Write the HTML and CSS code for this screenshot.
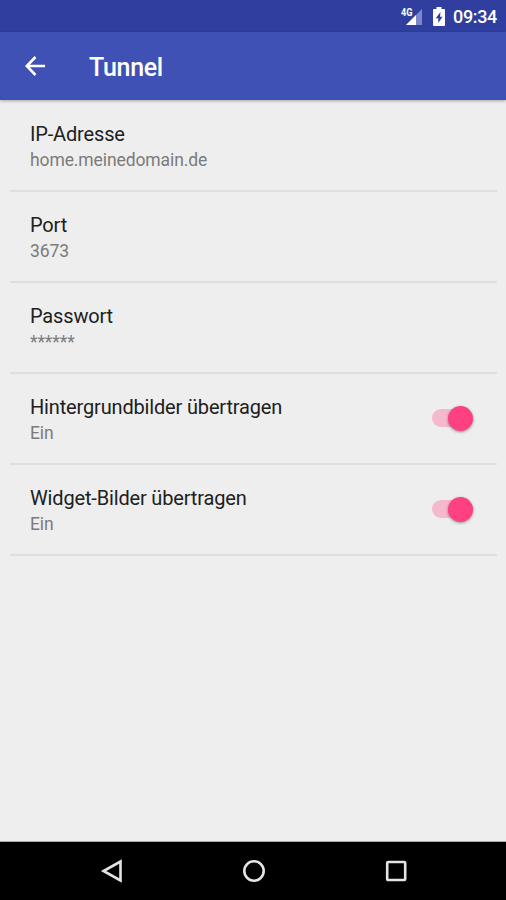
FILE: index.html
```
<!DOCTYPE html>
<html lang="de">
    <head>
        <meta charset="utf-8">
        <title>Tunnel</title>
        <link rel="stylesheet" href="styles.css">
    </head>
    <body>
        <div class="statusbar">
            <svg class="signal" width="22" height="20" viewBox="0 0 22 20">
                <path d="M21 3V19H5Z" fill="#7d88c9" />
                <path d="M15 9V19H5Z" fill="#fff" />
                <text x="0" y="9.5" textLength="11.5" lengthAdjust="spacingAndGlyphs">4G</text>
            </svg>
            <svg class="battery" width="12" height="19" viewBox="0 0 12 19">
                <path d="M3.5 0h5v2H11a1 1 0 0 1 1 1v15a1 1 0 0 1-1 1H1a1 1 0 0 1-1-1V3a1 1 0 0 1 1-1h2.500Z" fill="#fff" />
                <path d="M7.500 5L2.700 11.300H5.300V16L9.500 9.700H7Z" fill="#303f9f" />
            </svg>
            <span class="time">09:34</span>
        </div>

        <header class="toolbar">
            <svg width="20" height="20" viewBox="0 0 20 20" fill="none" stroke="#fff" stroke-width="2.600">
                <path d="M20 10H2M10.500 1L1.700 10L10.500 19" />
            </svg>
            <h1>Tunnel</h1>
        </header>

        <main class="settings">
            <div class="row">
                <div>
                    <div class="name">IP-Adresse</div>
                    <div class="value">home.meinedomain.de</div>
                </div>
            </div>
            <div class="row">
                <div>
                    <div class="name">Port</div>
                    <div class="value">3673</div>
                </div>
            </div>
            <div class="row">
                <div>
                    <div class="name">Passwort</div>
                    <div class="value">******</div>
                </div>
            </div>
            <div class="row">
                <div>
                    <div class="name">Hintergrundbilder übertragen</div>
                    <div class="value">Ein</div>
                </div>
                <div class="switch"><div class="thumb"></div></div>
            </div>
            <div class="row">
                <div>
                    <div class="name">Widget-Bilder übertragen</div>
                    <div class="value">Ein</div>
                </div>
                <div class="switch"><div class="thumb"></div></div>
            </div>
        </main>

        <nav class="navbar">
            <svg width="24" height="26" viewBox="0 0 24 26">
                <path d="M20.500 3.500V22.500L3.500 13Z" />
            </svg>
            <svg width="24" height="26" viewBox="0 0 24 26">
                <circle cx="12" cy="13" r="9.700" />
            </svg>
            <svg width="24" height="26" viewBox="0 0 24 26">
                <rect x="3.200" y="4" width="18" height="18" rx="1" />
            </svg>
        </nav>
    </body>
</html>
```
FILE: styles.css
```
* {
    box-sizing: border-box;
}
body {
    margin: 0;
    height: 900px;
    display: flex;
    flex-direction: column;
    background: #eee;
    font-family: Roboto, "Liberation Sans", sans-serif;
}
.statusbar {
    height: 32px;
    padding-right: 9px;
    display: flex;
    align-items: center;
    justify-content: flex-end;
    background: #303f9f;
    color: #fff;
}
.signal {
    margin: 0 10px 1px 0;
}
.signal text {
    font-size: 10px;
    font-weight: 700;
    fill: #fff;
    stroke: #303f9f;
    stroke-width: 1px;
    paint-order: stroke;
}
.battery {
    margin: 1px 8px 0 0;
}
.time {
    font-size: 18px;
    font-weight: 500;
    letter-spacing: -0.35px;
}
.toolbar {
    height: 68px;
    padding-left: 25px;
    display: flex;
    align-items: center;
    gap: 44px;
    background: #3f51b5;
    box-shadow: 0 1px 3px rgba(0, 0, 0, 0.3);
}
.toolbar h1 {
    margin: 2px 0 0;
    color: #fff;
    font-size: 25px;
    font-weight: 500;
    letter-spacing: -0.3px;
}
.settings {
    flex: 1;
    padding: 1px 9px 0 10px;
    border-bottom: 1px solid #aaa;
}
.row {
    height: 91px;
    padding: 20px 24px 0 20px;
    display: flex;
    justify-content: space-between;
    border-bottom: 2px solid #dfdfdf;
}
.name {
    color: #202020;
    font-size: 20px;
    line-height: 26px;
    letter-spacing: -0.16px;
}
.value {
    color: #7b7b7b;
    font-size: 17.5px;
    line-height: 26px;
    letter-spacing: -0.1px;
}
.switch {
    width: 41px;
    height: 18px;
    margin-top: 15px;
    display: flex;
    align-items: center;
    justify-content: flex-end;
    border-radius: 9px;
    background: #f5b9ce;
}
.thumb {
    width: 25px;
    height: 25px;
    flex: none;
    border-radius: 50%;
    background: #ff4081;
    box-shadow: 0 1px 3px rgba(0, 0, 0, 0.4);
}
.navbar {
    height: 58px;
    padding-left: 1px;
    display: flex;
    align-items: center;
    justify-content: center;
    gap: 118px;
    background: #000;
}
.navbar svg {
    fill: none;
    stroke: #e4e4e4;
    stroke-width: 2.6;
}
```
